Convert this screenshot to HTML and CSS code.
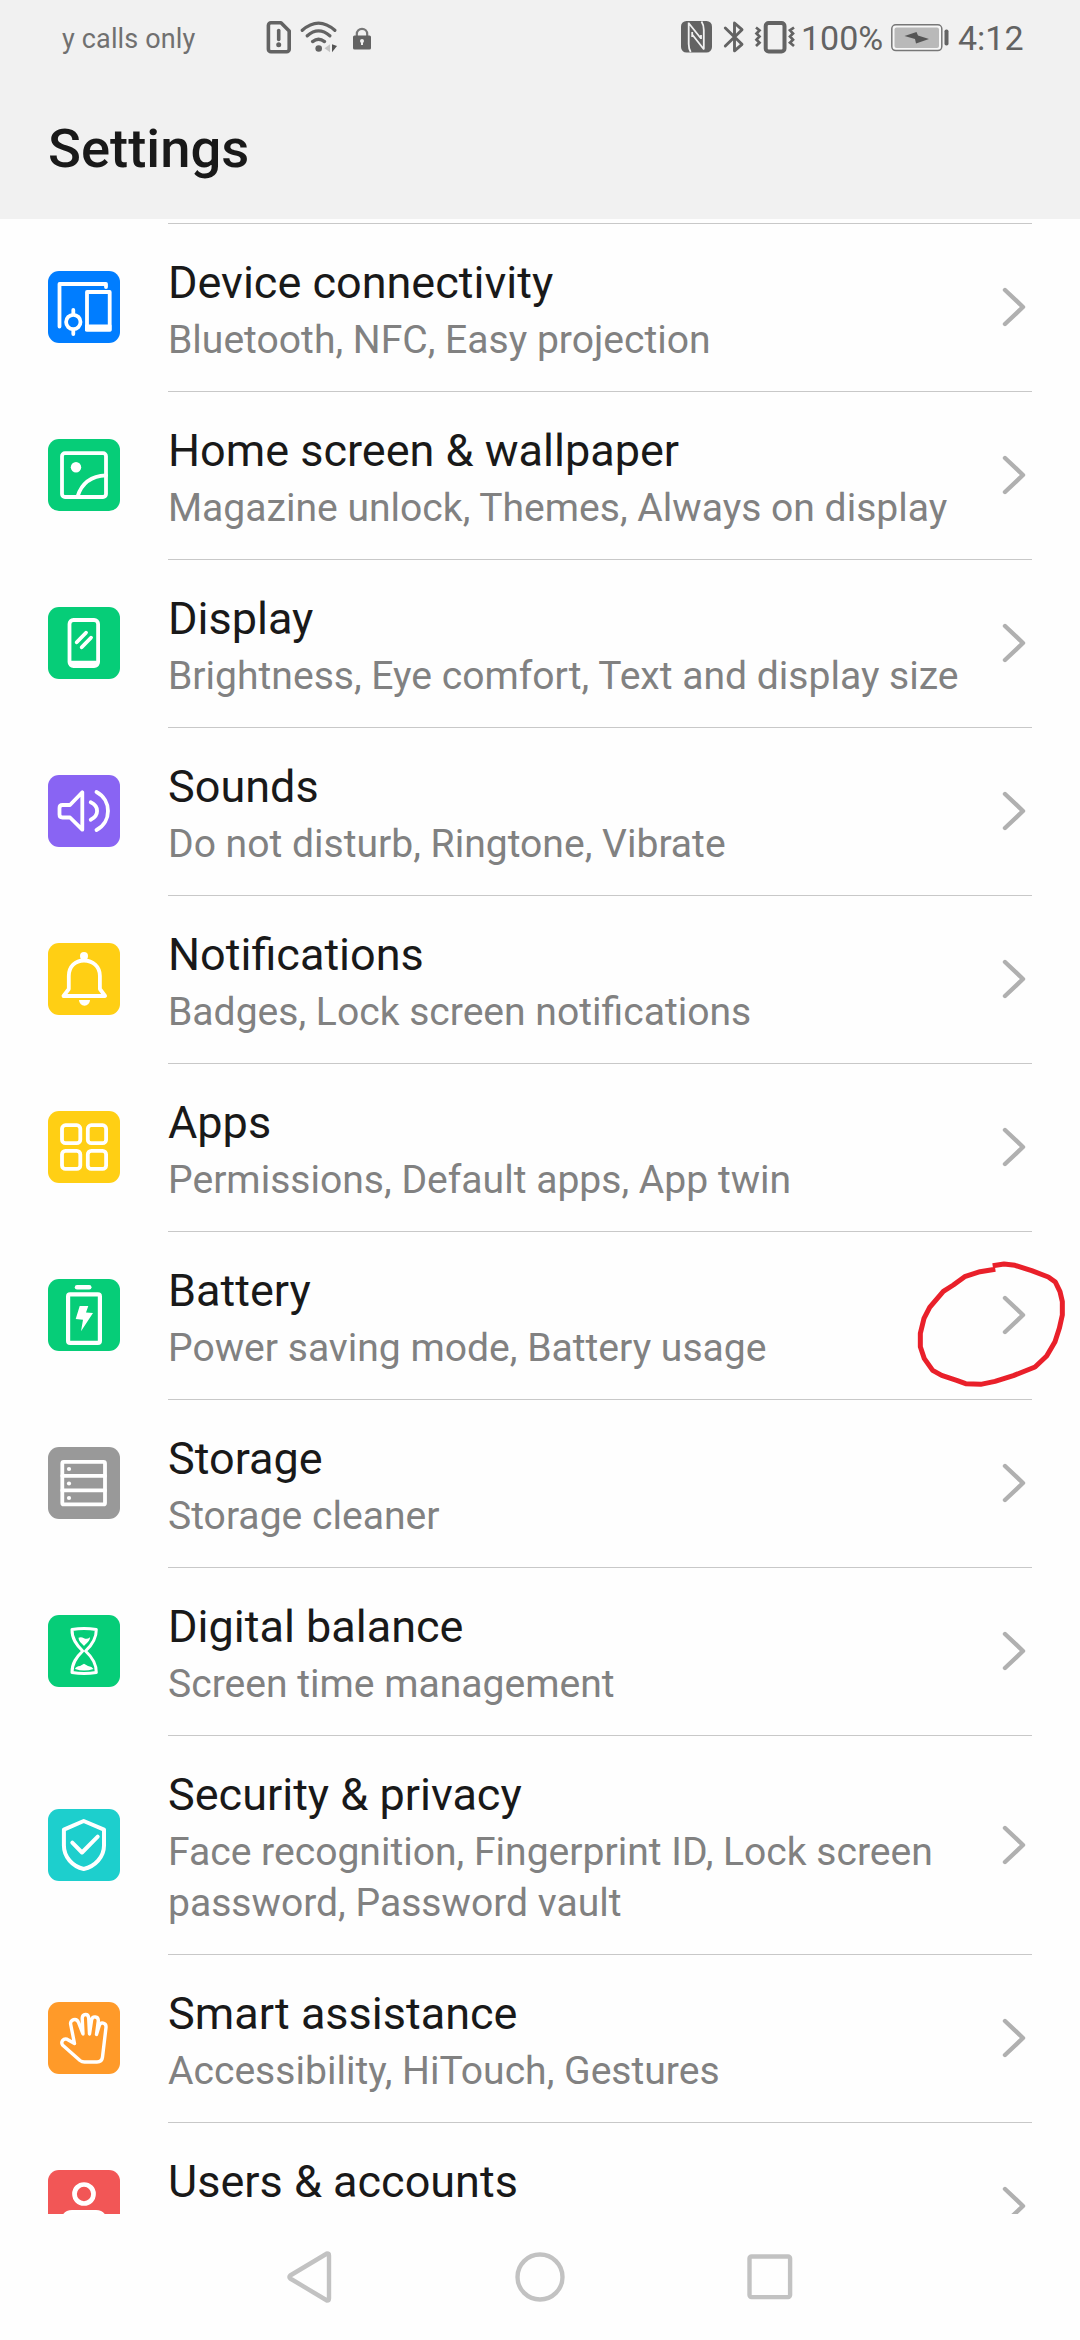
FILE: index.html
```html
<!DOCTYPE html>
<html lang="en">
<head>
<meta charset="utf-8">
<title>Settings</title>
<link rel="stylesheet" href="styles.css">
</head>
<body>
<div class="screen">
  <header class="header">
    <div class="status">
      <span class="carrier">y calls only</span>
      <svg class="st-sim" width="26" height="34" viewBox="0 0 26 34" fill="none" stroke="#636363"><path d="M4.5 2.8H15L23.2 11v18.200a2.600 2.600 0 0 1-2.600 2.600H5a2.600 2.600 0 0 1-2.600-2.600V5.400A2.600 2.600 0 0 1 5 2.800z" stroke-width="3.600" stroke-linejoin="round"/><path d="M12.700 10.500v9" stroke-width="3.600" stroke-linecap="round"/><circle cx="12.700" cy="24.700" r="2.500" fill="#636363" stroke="none"/></svg>
      <svg class="st-wifi" width="38" height="34" viewBox="0 0 38 34" fill="none" stroke="#636363" stroke-width="3.300" stroke-linecap="round"><path d="M2.300 9.300Q18.500-5 34.800 9.300M7.300 14.800Q18.500 5 29.800 14.800M12.600 20.600Q18.500 16 24.500 20.600"/><circle cx="18.700" cy="27.500" r="3.300" fill="#636363" stroke="none"/><path d="M30 23.200v8l-5.500-4z" fill="#c4c4c4" stroke="none"/><path d="M32 23.200v8l5-6.200z" fill="#555" stroke="none"/></svg>
      <svg class="st-lock" width="18" height="23" viewBox="0 0 18 23"><path d="M3.800 9V7a5.200 5.200 0 0 1 10.400 0v2" fill="none" stroke="#777" stroke-width="2.200"/><rect y="8.500" width="18" height="14" rx="1.500" fill="#636363"/><circle cx="9" cy="14" r="2" fill="#eee"/><path d="M9 14v4" stroke="#eee" stroke-width="2"/></svg>
      <svg class="st-nfc" width="32" height="32" viewBox="0 0 32 32"><rect width="31" height="31.500" rx="5.500" fill="#636363"/><path d="M7.700 1.500V23q0 5 2 8M8 2.500 20 17.500M11.200 13.500 23 28.500M20.500.500Q22.800 4 22.800 9v19.500M11.200 11v5M20 14v4" fill="none" stroke="#f1f1f1" stroke-width="1.800"/></svg>
      <svg class="st-bt" width="22" height="34" viewBox="0 0 22 34" fill="none" stroke="#636363" stroke-width="2.900" stroke-linejoin="round" stroke-linecap="round"><path d="M2.300 8 19 24.300l-7.500 6.500V3L19 9.700 2.300 26"/></svg>
      <svg class="st-vib" width="42" height="33" viewBox="0 0 42 33" fill="none" stroke="#636363"><rect x="11.700" y="2" width="18.800" height="28.500" rx="3" stroke-width="4"/><path d="M2 6.500 5.500 9.300 2.500 12.500 5.500 15.500 2.500 18.700 5.500 21.700 2 25M40 6.500 36 9.300 39 12.500 36 15.500 39 18.700 36 21.700 40 25" stroke-width="2.700"/></svg>
      <span class="clock pct">100%</span>
      <svg class="st-bat" width="58" height="28" viewBox="0 0 58 28"><rect x=".8" y=".8" width="50" height="25.800" rx="4" fill="#f7f7f7" stroke="#777" stroke-width="1.500"/><rect x="3.500" y="3.500" width="44.500" height="20.400" rx="2" fill="#b9b9b9"/><path d="M13.500 12 25.500 8l1.500 3.500L38 15l-13 4.500-1-4.500z" fill="#555"/><rect x="53.500" y="5.500" width="4" height="16" rx="1.800" fill="#636363"/></svg>
      <span class="clock">4:12</span>
    </div>
    <h1 class="heading">Settings</h1>
  </header>

  <main class="list">
    <div class="row">
      <svg class="icon blue" viewBox="0 0 72 72"><path d="M11.500 55.500V13h46.500v3"/><path d="M39 21h22.700v37.500H39z"/><path d="M38 54.500h24.500v5H38z" fill="#fff" stroke-width="2"/><circle cx="25.300" cy="51" r="7.200"/><path d="M25.300 39v4M25.300 59v4"/></svg>
      <div class="body"><div class="text"><div class="title">Device connectivity</div><div class="sub">Bluetooth, NFC, Easy projection</div></div><svg class="chev" viewBox="0 0 24 40"><path d="M3 3 21 20 3 37"/></svg></div>
    </div>
    <div class="row">
      <svg class="icon green" viewBox="0 0 72 72"><rect x="14" y="14.200" width="44" height="43.800" rx="3"/><circle cx="28" cy="28.300" r="5.200" class="solid"/><path d="M29.700 57C33.500 45 43 37 58 36.300"/></svg>
      <div class="body"><div class="text"><div class="title">Home screen &amp; wallpaper</div><div class="sub">Magazine unlock, Themes, Always on display</div></div><svg class="chev" viewBox="0 0 24 40"><path d="M3 3 21 20 3 37"/></svg></div>
    </div>
    <div class="row">
      <svg class="icon green" viewBox="0 0 72 72"><rect x="21.500" y="13" width="28.600" height="46" rx="4"/><path d="M21 53.700h30v2.300q0 4-4 4H25q-4 0-4-4z" class="solid"/><path d="M28.700 35.300 38 25.700M33.700 40.300 43 30.700"/></svg>
      <div class="body"><div class="text"><div class="title">Display</div><div class="sub">Brightness, Eye comfort, Text and display size</div></div><svg class="chev" viewBox="0 0 24 40"><path d="M3 3 21 20 3 37"/></svg></div>
    </div>
    <div class="row">
      <svg class="icon purple" viewBox="0 0 72 72"><path d="M14.500 30H22L34.300 17.300v37.400L22 42.500h-7.500q-3 0-3-3V33q0-3 3-3zM42.700 27.300c8.500 4 8.500 13.400 0 17.400M48.500 17c15.300 8 15.300 30 0 38"/></svg>
      <div class="body"><div class="text"><div class="title">Sounds</div><div class="sub">Do not disturb, Ringtone, Vibrate</div></div><svg class="chev" viewBox="0 0 24 40"><path d="M3 3 21 20 3 37"/></svg></div>
    </div>
    <div class="row">
      <svg class="icon yellow" viewBox="0 0 72 72"><circle cx="36" cy="13" r="4" class="solid"/><path d="M15.500 53 20.800 46V33c0-9.500 6.500-15.500 15.200-15.500S51.900 23.500 51.900 33v13l5.200 7z"/><path d="M31 57h11a5.500 5.800 0 0 1-11 0z" class="solid"/></svg>
      <div class="body"><div class="text"><div class="title">Notifications</div><div class="sub">Badges, Lock screen notifications</div></div><svg class="chev" viewBox="0 0 24 40"><path d="M3 3 21 20 3 37"/></svg></div>
    </div>
    <div class="row">
      <svg class="icon yellow" viewBox="0 0 72 72"><rect x="14" y="14.200" width="18.300" height="18" rx="3.500"/><rect x="39.800" y="14.200" width="18.300" height="18" rx="3.500"/><rect x="14" y="39.900" width="18.300" height="18" rx="3.500"/><rect x="39.800" y="39.900" width="18.300" height="18" rx="3.500"/></svg>
      <div class="body"><div class="text"><div class="title">Apps</div><div class="sub">Permissions, Default apps, App twin</div></div><svg class="chev" viewBox="0 0 24 40"><path d="M3 3 21 20 3 37"/></svg></div>
    </div>
    <div class="row">
      <svg class="icon green" viewBox="0 0 72 72"><path d="M29 8.300h12.300" stroke-width="4.400"/><rect x="20.100" y="15.400" width="31.800" height="48.500" rx="2" stroke-width="4.200"/><path d="M31.700 27h8.600L38 33.500l7 .5-12 18.300 2-11.600-7.300-.7z" class="solid"/></svg>
      <div class="body"><div class="text"><div class="title">Battery</div><div class="sub">Power saving mode, Battery usage</div></div><svg class="chev" viewBox="0 0 24 40"><path d="M3 3 21 20 3 37"/></svg></div>
    </div>
    <div class="row">
      <svg class="icon gray" viewBox="0 0 72 72"><rect x="14.300" y="14.900" width="42.700" height="42.500" rx="1.500"/><path d="M14.300 28.800H57M14.300 43.400H57"/><circle cx="21" cy="22" r="2.100" class="solid"/><circle cx="21" cy="36.500" r="2.100" class="solid"/><circle cx="21" cy="51" r="2.100" class="solid"/></svg>
      <div class="body"><div class="text"><div class="title">Storage</div><div class="sub">Storage cleaner</div></div><svg class="chev" viewBox="0 0 24 40"><path d="M3 3 21 20 3 37"/></svg></div>
    </div>
    <div class="row">
      <svg class="icon green" viewBox="0 0 72 72"><path d="M24 14.500Q36 12.500 48.300 14.500C48.500 24 44 30 37.500 36 44 42 48.500 48 48.300 57.500Q36 59.500 24 57.500C23.800 48 28.500 42 34.700 36 28.500 30 23.800 24 24 14.500z" stroke-width="3"/><path d="M30.500 22.800Q33 21.600 36 23.200T42 22.300C42 26 39 28 36 31 33 28 30.500 26 30.500 22.800zM27 54q1-2.600 5-3l4-2.200 4 2.200q4 .4 5.500 3Q36 57 27 54z" class="solid"/></svg>
      <div class="body"><div class="text"><div class="title">Digital balance</div><div class="sub">Screen time management</div></div><svg class="chev" viewBox="0 0 24 40"><path d="M3 3 21 20 3 37"/></svg></div>
    </div>
    <div class="row">
      <svg class="icon teal" viewBox="0 0 72 72"><path d="M35.700 12 56 20.600V36.500C56 48 47 57.500 35.700 60 24.500 57.500 15.900 48 15.900 36.500V20.600z" stroke-width="4"/><path d="M24.300 33.700 34 43.500 49.700 27.700" stroke-width="4"/></svg>
      <div class="body"><div class="text"><div class="title">Security &amp; privacy</div><div class="sub">Face recognition, Fingerprint ID, Lock screen password, Password vault</div></div><svg class="chev" viewBox="0 0 24 40"><path d="M3 3 21 20 3 37"/></svg></div>
    </div>
    <div class="row">
      <svg class="icon orange" viewBox="0 0 72 72"><path d="M26.500 41.500 19 37.200C15.500 36 12.500 39.500 14.500 43L32 58.500Q34 60 36.500 60H49q5 0 5.500-5L58 25.500C58.500 20.500 52.500 19.500 51.300 23.500L48.500 32.500 50.300 19C50.500 14 44.500 13.500 43.600 18L41.500 32 40.700 16C40.300 11 34.500 11.500 34.200 16L35 32 30.500 20.500C28.500 15.500 21.500 17.500 22.700 22.500z" stroke-width="3.400"/></svg>
      <div class="body"><div class="text"><div class="title">Smart assistance</div><div class="sub">Accessibility, HiTouch, Gestures</div></div><svg class="chev" viewBox="0 0 24 40"><path d="M3 3 21 20 3 37"/></svg></div>
    </div>
    <div class="row">
      <svg class="icon red" viewBox="0 0 72 72"><circle cx="36" cy="24" r="9.500" stroke-width="4.700"/><path d="M14 46Q17 40 24 40h24q7 0 10 6v12H14z" class="solid"/></svg>
      <div class="body"><div class="text"><div class="title">Users &amp; accounts</div><div class="sub">&nbsp;</div></div><svg class="chev" viewBox="0 0 24 40"><path d="M3 3 21 20 3 37"/></svg></div>
    </div>
  </main>

  <nav class="nav">
    <svg width="46" height="54" viewBox="0 0 46 54"><path d="M41 3.500 4.200 25.500Q2.800 27 4.200 28.500L41 50.500Q43 50.500 43 48.500V5.500Q43 3.500 41 3.500z"/></svg>
    <svg width="50" height="50" viewBox="0 0 50 50"><circle cx="25" cy="25" r="22.500"/></svg>
    <svg width="46" height="46" viewBox="0 0 46 46"><rect x="2.500" y="2.500" width="40.600" height="40.600" rx="2"/></svg>
  </nav>

  <svg class="marker" viewBox="0 0 600 600"><path d="M346 148 300 155 254 170 220 195 190 214 149 262 132 295 121 340 121 380 133 416 158 451 185 466 230 481 257 491 302 493 345 484 400 467 465 441 500 408 525 365 538 325 547 285 547 245 540 215 526 186 505 171 455 152 405 136 372 132 338 137"/></svg>
</div>
</body>
</html>
```

FILE: styles.css
```css
* { box-sizing: border-box; }

body {
  margin: 0;
  background: #fefefe;
  font-family: Roboto, "Liberation Sans", sans-serif;
}

svg { display: block; flex: none; }

.screen {
  position: relative;
  display: flex;
  flex-direction: column;
  width: 1080px;
  height: 2340px;
  overflow: hidden;
}

.header {
  flex: none;
  height: 219px;
  background: #f1f1f1;
}

.status {
  display: flex;
  align-items: flex-start;
  height: 76px;
  padding-left: 62px;
  color: #636363;
}

.carrier {
  width: 204px;
  padding-top: 23px;
  font-size: 27px;
  line-height: 32px;
  letter-spacing: 0.15px;
  color: #707070;
  white-space: nowrap;
}

.st-sim { margin-top: 20px; }
.st-wifi { margin: 21px 0 0 8px; }
.st-lock { margin: 27px 0 0 15px; }
.st-nfc { margin: 21px 0 0 310px; }
.st-bt { margin: 20px 0 0 10px; }
.st-vib { margin: 21px 0 0 9px; }
.st-bat { margin: 24px 0 0 0; }

.clock {
  padding: 18px 0 0 9px;
  font-size: 34px;
  line-height: 40px;
}

.pct {
  width: 95px;
  padding-left: 5px;
}

.heading {
  margin: 41px 0 0 48px;
  font-size: 54.4px;
  line-height: 64px;
  font-weight: 500;
  color: #191919;
}

.list {
  height: 1995px;
  padding-top: 5px;
  overflow: hidden;
  background: linear-gradient(#c8c8c8, #c8c8c8) 168px 4px / 864px 1px no-repeat;
}

.row {
  display: flex;
  align-items: center;
  gap: 48px;
  padding: 0 48px;
}

.icon {
  width: 72px;
  height: 72px;
  margin-bottom: 2px;
  border-radius: 11px;
  fill: none;
  stroke: #fff;
  stroke-width: 3.8px;
  stroke-linecap: round;
  stroke-linejoin: round;
}

.icon .solid { fill: #fff; stroke: none; }

.blue { background: #007dff; }
.green { background: #06cd78; }
.purple { background: #8964f3; }
.yellow { background: #ffcf14; }
.gray { background: #999; }
.teal { background: #1dcfcd; }
.orange { background: #ff9a29; }
.red { background: #f25656; }

.body {
  flex: 1;
  display: flex;
  align-items: center;
  justify-content: space-between;
  padding: 0 6px 1px 0;
  border-bottom: 1px solid #c8c8c8;
}

.text {
  width: 800px;
  padding: 32px 0 24px;
}

.title {
  font-size: 45px;
  line-height: 53px;
  color: #191919;
}

.sub {
  margin-top: 6px;
  font-size: 39.1px;
  line-height: 51px;
  color: #818181;
}

.chev {
  width: 24px;
  height: 40px;
  fill: none;
  stroke: #b0b0b0;
  stroke-width: 4.4px;
  stroke-linecap: round;
  stroke-linejoin: round;
}

.nav {
  display: flex;
  align-items: center;
  justify-content: space-between;
  height: 126px;
  padding: 0 287px 0 286px;
  fill: none;
  stroke: #c2c2c2;
  stroke-width: 4.4px;
  stroke-linejoin: round;
}

.marker {
  position: absolute;
  left: 880px;
  top: 1220px;
  width: 200px;
  height: 200px;
  fill: none;
  stroke: #e9202a;
  stroke-width: 15px;
  stroke-linejoin: round;
}
```
